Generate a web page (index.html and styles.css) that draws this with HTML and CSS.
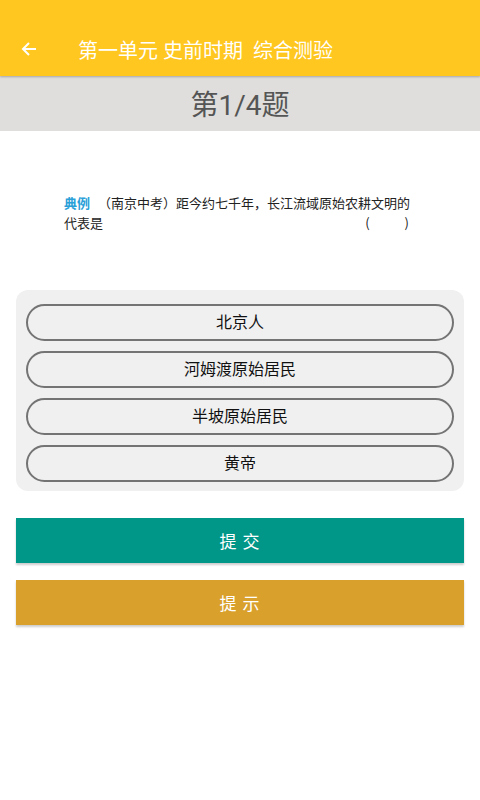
FILE: index.html
```html
<!DOCTYPE html>
<html lang="zh-CN">
<head>
<meta charset="utf-8">
<link rel="stylesheet" href="styles.css">
</head>
<body>
<header class="appbar">
  <svg class="back" width="18" height="18" viewBox="0 0 18 18"><path d="M16 9H3M9 3L3 9l6 6" fill="none" stroke="#fff" stroke-width="2"/></svg>
  <span class="title">第一单元 史前时期&nbsp; 综合测验</span>
</header>
<div class="progress">第1/4题</div>
<section class="question">
  <p class="line"><span class="tag">典例</span>（南京中考）距今约七千年，长江流域原始农耕文明的</p>
  <p class="line second"><span>代表是</span><span class="paren">(　　)</span></p>
</section>
<div class="options">
  <div class="opt">北京人</div>
  <div class="opt">河姆渡原始居民</div>
  <div class="opt">半坡原始居民</div>
  <div class="opt">黄帝</div>
</div>
<div class="btn submit">提 交</div>
<div class="btn hint">提 示</div>
</body>
</html>
```
FILE: styles.css
```css
* { box-sizing: border-box; }
html, body { margin: 0; padding: 0; background: #fff; }
body { width: 480px; height: 800px; font-family: Roboto, "Noto Sans CJK SC", sans-serif; }
p { margin: 0; }
.appbar {
  height: 76px;
  background: #FFC720;
  display: flex;
  align-items: center;
  padding: 22px 0 0 20px;
  box-shadow: 0 1px 2px rgba(0,0,0,0.25);
  position: relative;
  z-index: 1;
}
.back { flex: none; }
.title { color: #fff; font-size: 20px; margin-left: 40px; }
.progress {
  height: 55px;
  background: #DFDEDC;
  color: #555;
  font-size: 28px;
  display: flex;
  align-items: center;
  justify-content: center;
  padding-bottom: 1px;
}
.question {
  padding: 62px 68px 0 64px;
  height: 159px;
  font-family: "Noto Sans CJK SC", serif;
  font-size: 13px;
  color: #222;
  font-weight: 400;
}
.line { line-height: 20px; white-space: nowrap; }
.tag { color: #2aa0d8; font-weight: 700; margin-right: 8px; }
.second { display: flex; justify-content: space-between; }
.paren { letter-spacing: 3px; }
.options {
  margin: 0 16px;
  background: #F0F0F0;
  border-radius: 12px;
  padding: 14px 10px 9px;
  display: flex;
  flex-direction: column;
  gap: 10px;
}
.opt {
  height: 37px;
  border: 2px solid #747474;
  border-radius: 19px;
  display: flex;
  align-items: center;
  justify-content: center;
  font-size: 16px;
  color: #111;
  padding-bottom: 3px;
}
.btn {
  margin: 0 16px;
  height: 45px;
  display: flex;
  align-items: center;
  justify-content: center;
  color: #fff;
  font-size: 17px;
  letter-spacing: 1px;
  box-shadow: 0 2px 2px rgba(0,0,0,0.2);
}
.submit { background: #009688; margin-top: 27px; }
.hint { background: #D9A02C; margin-top: 17px; }
```
